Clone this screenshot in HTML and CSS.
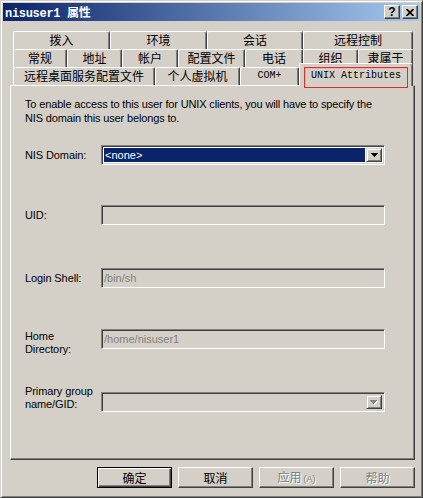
FILE: index.html
```html
<!DOCTYPE html>
<html lang="zh-CN">
<head>
    <meta charset="UTF-8">
    <title>nisuser1 属性</title>
    <link rel="stylesheet" href="styles.css">
</head>
<body>
    <div class="window">
        <header class="titlebar">
            <span class="title">nisuser1 属性</span>
            <div class="title-buttons">
                <button class="tbtn help">?</button>
                <button class="tbtn close">
                    <svg width="8" height="7" viewBox="0 0 8 7"><path d="M0.5 0L7.5 7M7.5 0L0.5 7" stroke="#000" stroke-width="1.7"/></svg>
                </button>
            </div>
        </header>
        <div class="content">
            <div class="tabs">
                <div class="tab-row row1">
                    <div class="tab">拨入</div>
                    <div class="tab">环境</div>
                    <div class="tab">会话</div>
                    <div class="tab">远程控制</div>
                </div>
                <div class="tab-row row2">
                    <div class="tab">常规</div>
                    <div class="tab">地址</div>
                    <div class="tab">帐户</div>
                    <div class="tab">配置文件</div>
                    <div class="tab">电话</div>
                    <div class="tab">组织</div>
                    <div class="tab">隶属于</div>
                </div>
                <div class="tab-row row3">
                    <div class="tab">远程桌面服务配置文件</div>
                    <div class="tab">个人虚拟机</div>
                    <div class="tab mono">COM+</div>
                    <div class="tab active"><span class="mark">UNIX Attributes</span></div>
                </div>
            </div>
            <section class="panel">
                <p class="intro">To enable access to this user for UNIX clients, you will have to specify the NIS domain this user belongs to.</p>
                <div class="field">
                    <span class="label">NIS Domain:</span>
                    <div class="combo">
                        <span class="value">&lt;none&gt;</span>
                        <span class="drop">
                            <svg width="7" height="4" viewBox="0 0 7 4"><path d="M0 0h7v1H0zM1 1h5v1H1zM2 2h3v1H2zM3 3h1v1H3z" fill="#000"/></svg>
                        </span>
                    </div>
                </div>
                <div class="field uid">
                    <span class="label">UID:</span>
                    <div class="input"></div>
                </div>
                <div class="field">
                    <span class="label">Login Shell:</span>
                    <div class="input">/bin/sh</div>
                </div>
                <div class="field home">
                    <span class="label">Home<br>Directory:</span>
                    <div class="input">/home/nisuser1</div>
                </div>
                <div class="field group">
                    <span class="label">Primary group<br>name/GID:</span>
                    <div class="combo disabled">
                        <span class="value"></span>
                        <span class="drop">
                            <svg width="8" height="5" viewBox="0 0 8 5"><path d="M1 1h7v1H1zM2 2h5v1H2zM3 3h3v1H3zM4 4h1v1H4z" fill="#fff"/><path d="M0 0h7v1H0zM1 1h5v1H1zM2 2h3v1H2zM3 3h1v1H3z" fill="#808080"/></svg>
                        </span>
                    </div>
                </div>
            </section>
            <div class="actions">
                <button class="btn default">确定</button>
                <button class="btn">取消</button>
                <button class="btn disabled">应用<small>(A)</small></button>
                <button class="btn disabled">帮助</button>
            </div>
        </div>
    </div>
</body>
</html>
```

FILE: styles.css
```css
* {
    box-sizing: border-box;
}

body {
    margin: 0;
    background-color: #fff;
    font-family: "Liberation Sans", Arial, sans-serif;
    font-size: 11px;
    color: #000;
}

.window {
    width: 423px;
    height: 498px;
    background-color: #d4d0c8;
    border: 1px solid;
    border-color: #d4d0c8 #404040 #404040 #d4d0c8;
    box-shadow: inset 1px 1px #fff, inset -1px -1px #808080;
    padding: 2px;
    display: flex;
    flex-direction: column;
}

.titlebar {
    height: 18px;
    display: flex;
    align-items: center;
    justify-content: space-between;
    background: linear-gradient(to right, #0a246a, #a6caf0);
    padding: 0 2px;
}

.title {
    color: #fff;
    font-family: "Liberation Mono", "Noto Sans CJK SC", monospace;
    font-weight: bold;
    font-size: 12px;
    letter-spacing: -0.3px;
}

.title-buttons {
    display: flex;
    gap: 2px;
}

.tbtn {
    width: 16px;
    height: 14px;
    padding: 0;
    margin: 0;
    background-color: #d4d0c8;
    border: 1px solid;
    border-color: #fff #404040 #404040 #fff;
    box-shadow: inset -1px -1px #808080;
    display: flex;
    align-items: center;
    justify-content: center;
    font-family: "Liberation Sans", sans-serif;
    font-weight: bold;
    font-size: 12px;
    line-height: 12px;
    color: #000;
}

.content {
    flex: 1;
    display: flex;
    flex-direction: column;
    padding: 10px 5px 0 7px;
}

/* tabs */
.tabs {
    padding: 0 2px 0 3px;
}

.tab-row {
    display: flex;
    height: 18px;
}

.tab {
    flex: none;
    border: 1px solid;
    border-bottom: none;
    border-color: #fff #404040 #404040 #fff;
    border-radius: 2px 2px 0 0;
    box-shadow: inset -1px 0 #808080;
    display: flex;
    align-items: center;
    justify-content: center;
    font-family: "Noto Sans CJK SC", sans-serif;
    font-size: 12px;
    line-height: 16px;
    padding-bottom: 1px;
}

.row1 .tab { width: 97px; }
.row1 .tab:nth-child(3) { width: 96px; }
.row1 .tab:nth-child(4) { width: 110px; }

.row2 .tab { width: 55px; }
.row2 .tab:nth-child(1) { width: 54px; }
.row2 .tab:nth-child(3) { width: 56px; }
.row2 .tab:nth-child(4) { width: 67px; }
.row2 .tab:nth-child(5) { width: 58px; }

.row3 .tab:nth-child(1) { width: 142px; }
.row3 .tab:nth-child(2) { width: 85px; }
.row3 .tab:nth-child(3) { width: 59px; }

.tab.mono {
    font-family: "Liberation Mono", monospace;
    font-size: 10px;
}

.tab.active {
    width: 114px;
    margin-top: -4px;
    margin-bottom: -1px;
    z-index: 1;
    background-color: #d4d0c8;
    align-items: flex-start;
    justify-content: flex-start;
    padding: 3px 0 0 4px;
}

.mark {
    display: block;
    width: 104px;
    height: 21px;
    border: 1px solid #d83030;
    box-shadow: inset 1px 1px #f0b0b0;
    padding: 1px 0 0 6px;
    font-family: "Liberation Mono", monospace;
    font-size: 10px;
    line-height: 13px;
}

/* panel */
.panel {
    height: 375px;
    border: 1px solid;
    border-color: #fff #404040 #404040 #fff;
    box-shadow: inset -1px -1px #808080;
    padding: 11px 14px 0 14px;
}

.intro {
    margin: 0 0 20px;
    line-height: 14px;
    letter-spacing: -0.15px;
    width: 360px;
}

.field {
    display: flex;
    align-items: center;
    height: 20px;
    margin-top: 43px;
}

.intro + .field {
    margin-top: 0;
}

.field.uid {
    margin-top: 40px;
}

.field.home {
    margin-top: 41px;
}

.label {
    width: 76px;
    flex: none;
    line-height: 13px;
    letter-spacing: -0.1px;
}

.field.home .label {
    margin-top: 7px;
}

.field.group .label {
    margin-bottom: 9px;
}

.input,
.combo {
    width: 284px;
    height: 20px;
    border: 1px solid;
    border-color: #808080 #fff #fff #808080;
    box-shadow: inset 1px 1px #404040, inset -1px -1px #d4d0c8;
}

.input {
    padding: 0 2px 0 2px;
    display: flex;
    align-items: center;
    color: #808080;
}

.combo {
    background-color: #fff;
    padding: 2px 2px 2px 2px;
    display: flex;
}

.combo .value {
    flex: 1;
    background-color: #0a246a;
    color: #fff;
    padding-left: 1px;
    display: flex;
    align-items: center;
    margin-right: 1px;
}

.combo .drop {
    width: 16px;
    flex: none;
    background-color: #d4d0c8;
    border: 1px solid;
    border-color: #d4d0c8 #404040 #404040 #d4d0c8;
    box-shadow: inset 1px 1px #fff, inset -1px -1px #808080;
    display: flex;
    align-items: center;
    justify-content: center;
}

.combo.disabled {
    background-color: #d4d0c8;
}

.combo.disabled .value {
    background-color: transparent;
}

/* buttons */
.actions {
    display: flex;
    justify-content: flex-end;
    gap: 6px;
    margin-top: 7px;
}

.btn {
    width: 75px;
    height: 21px;
    margin: 0;
    padding: 0;
    background-color: #d4d0c8;
    border: 1px solid;
    border-color: #fff #404040 #404040 #fff;
    box-shadow: inset -1px -1px #808080;
    font-family: "Noto Sans CJK SC", sans-serif;
    font-size: 12px;
    line-height: 16px;
    color: #000;
}

.btn.default {
    border-color: #000;
    box-shadow: inset 1px 1px #fff, inset -1px -1px #404040, inset -2px -2px #808080;
}

.btn.disabled {
    color: #808080;
    text-shadow: 1px 1px #fff;
}

.btn small {
    font-family: "Liberation Sans", sans-serif;
    font-size: 9px;
    margin-left: 2px;
}
```
